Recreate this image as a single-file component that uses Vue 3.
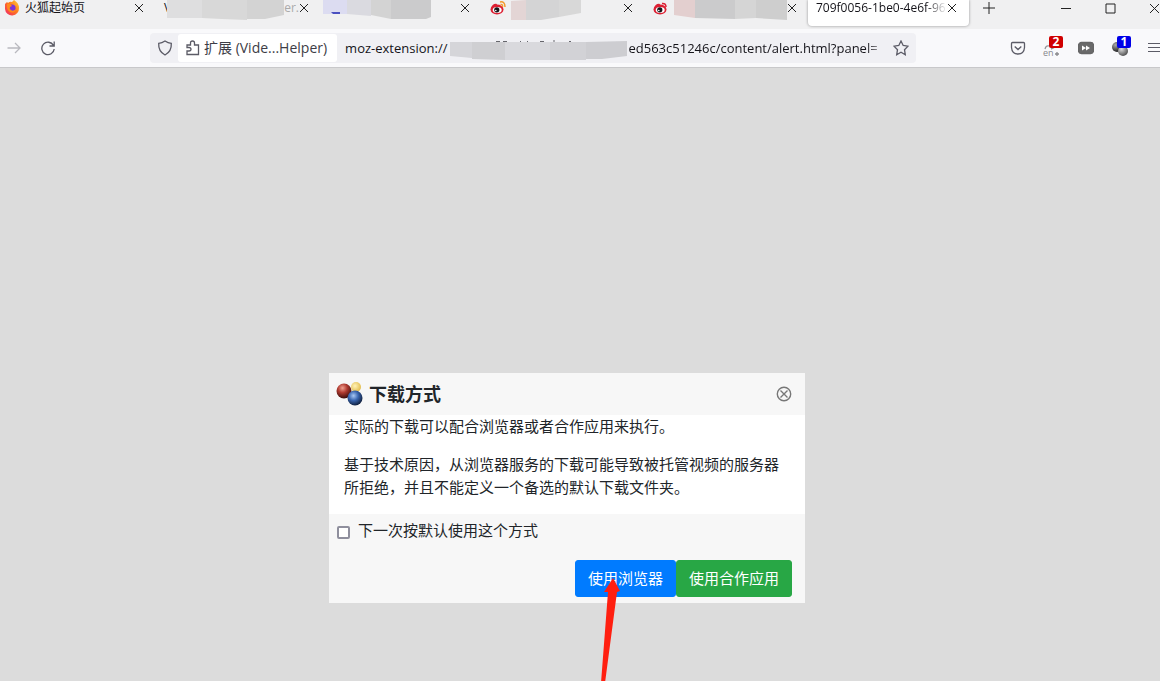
<template>
  <div class="browser">
    <!-- Tab strip -->
    <header class="tab-strip">
      <div v-for="tab in tabs" :key="tab.id" class="tab" :class="[tab.id, { active: tab.active }]">
        <svg v-if="tab.id === 'home'" class="favicon" width="16" height="16" viewBox="0 0 16 16">
          <defs>
            <linearGradient id="fox" x1="1" y1="0" x2="0" y2="1">
              <stop offset="0" stop-color="#ffd43a" />
              <stop offset="0.45" stop-color="#ff7a1f" />
              <stop offset="1" stop-color="#f0226b" />
            </linearGradient>
          </defs>
          <path d="M1 4 L3 2 L4 3 Q6 1 8 2 L10 0 Q15 3 15 8 A7 7 0 0 1 1 9 Z" fill="url(#fox)" />
          <circle cx="8" cy="8" r="3.6" fill="#7b35d8" />
          <path d="M3 4 Q6 3 8 6 L6 7 Q5 9 7 10 Q9 12 12 9 Q11 14 6 12 Q2 9 3 4" fill="#ff8a1c" />
        </svg>
        <svg v-if="tab.weibo" class="favicon" width="16" height="16" viewBox="0 0 16 16">
          <ellipse cx="7" cy="9.5" rx="6.5" ry="5" fill="#dc2033" />
          <path d="M1 8 Q3 3 7 4 L6 7 Z" fill="#dc2033" />
          <ellipse cx="7.200" cy="10" rx="4.500" ry="3" fill="#fff" />
          <circle cx="6.8" cy="9.8" r="2.6" fill="#16161a" />
          <circle cx="5.8" cy="10.5" r="0.8" fill="#fff" />
          <path v-if="tab.id === 'weibo1'" d="M10 2 Q15 1 15 7 M10.500 4.500 Q13 4 12.500 7" fill="none" stroke="#f39a2d" stroke-width="1.5" />
          <path v-else d="M9 3.500 Q13 3 13 7" fill="none" stroke="#dc2033" stroke-width="1.500" />
        </svg>
        <span v-if="tab.title" class="tab-title">{{ tab.title }}</span>
        <svg v-if="tab.patch" class="tab-patch" :width="tab.patchWidth" height="21" :viewBox="'0 0 ' + tab.patchWidth + ' 21'">
          <path v-for="(p, i) in tab.patch" :key="i" :d="p.d" :fill="p.fill" />
        </svg>
        <span v-if="tab.tail" class="tab-tail">{{ tab.tail }}</span>
        <button class="tab-close" aria-label="关闭标签页">
          <svg width="10" height="10" viewBox="0 0 10 10"><path d="M1 1 L9 9 M9 1 L1 9" /></svg>
        </button>
      </div>
      <button class="new-tab" aria-label="新建标签页">
        <svg width="12" height="12" viewBox="0 0 12 12"><path d="M6 0 V12 M0 6 H12" /></svg>
      </button>
      <div class="window-buttons">
        <button aria-label="最小化"><svg width="11" height="11" viewBox="0 0 11 11"><path d="M0 5.500 H10" /></svg></button>
        <button aria-label="最大化"><svg width="11" height="11" viewBox="0 0 11 11"><path d="M1 1 H10 V10 H1 Z" /></svg></button>
        <button aria-label="关闭"><svg width="11" height="11" viewBox="0 0 11 11"><path d="M1 1 L10 10 M10 1 L1 10" /></svg></button>
      </div>
    </header>

    <!-- Navigation toolbar -->
    <nav class="toolbar">
      <button class="tool forward" aria-label="前进">
        <svg width="14" height="14" viewBox="0 0 14 14"><path d="M0.500 7 H13 M8 2 L13 7 L8 12" /></svg>
      </button>
      <button class="tool reload" aria-label="刷新">
        <svg width="16" height="16" viewBox="0 0 16 16"><path d="M13.500 5.500 A6.200 6.200 0 1 0 14.200 9 M14.200 1.500 V6 H9.500" /></svg>
      </button>
      <div class="urlbar">
        <svg class="shield" width="16" height="16" viewBox="0 0 16 16">
          <path d="M8 1 Q11 3 14.300 3.300 Q14.800 11.500 8 15 Q1.200 11.500 1.700 3.300 Q5 3 8 1 Z" />
        </svg>
        <button class="identity">
          <svg width="14" height="16" viewBox="0 0 14 16">
            <path d="M1 5 H4.500 V3 Q4.500 1 6.500 1 Q8.500 1 8.500 3 V5 H12.500 V14.500 H1 V11 H3 Q5 11 5 9.200 Q5 7.500 3 7.500 H1 Z" />
          </svg>
          <span>扩展 (Vide...Helper)</span>
        </button>
        <div class="address">
          <span class="scheme">moz-extension://</span>
          <svg class="url-patch" width="178" height="22" viewBox="0 0 178 22">
            <path d="M0 4 H36 V20 H22 L0 18 Z" fill="#d5d5d9" />
            <path d="M36 4 H55 V22 L22 21 V4 Z" fill="#cfcfd2" />
            <path d="M55 4 H100 V22 H55 Z" fill="#d9d9dd" />
            <path d="M100 4 H136 V22 H100 Z" fill="#d2d2d6" />
            <path d="M136 4 L177 3 V18 L152 21 H136 Z" fill="#cdcdd1" />
            <path d="M46 3.500 H50 M53 3.500 H57 M70 3.500 H71 M77 3.500 H78 M90 3.500 H94 M104 2 V4 M119 3.500 H121" fill="none" stroke="#66666c" stroke-width="1" />
          </svg>
          <span class="path">ed563c51246c/content/alert.html?panel=</span>
        </div>
        <button class="tool star" aria-label="添加书签">
          <svg width="16" height="16" viewBox="0 0 16 16"><path d="M8 1 L10.200 5.500 L15 6.200 L11.500 9.700 L12.300 14.700 L8 12.300 L3.700 14.700 L4.500 9.700 L1 6.200 L5.800 5.500 Z" /></svg>
        </button>
      </div>
      <div class="extensions">
        <button class="tool" aria-label="Pocket">
          <svg width="16" height="16" viewBox="0 0 16 16"><path d="M2.500 2.500 H13.500 Q14.500 2.500 14.500 3.500 V7.500 Q14 14 8 14 Q2 14 1.500 7.500 V3.500 Q1.500 2.500 2.500 2.500 Z M4.700 6.500 L8 9.500 L11.300 6.500" /></svg>
        </button>
        <button class="tool" aria-label="翻译">
          <svg width="18" height="18" viewBox="0 0 18 18">
            <path d="M2 10 Q3 6 6 7 M8 10 Q12 9 14 5" stroke="#929296" />
            <text x="0" y="17" class="mini-text">en</text>
            <path d="M12 15 H16 M14 13 V17" stroke="#88888c" />
          </svg>
          <span class="badge red">2</span>
        </button>
        <button class="tool" aria-label="快进">
          <svg width="16" height="14" viewBox="0 0 16 14">
            <rect x="0.500" y="1.500" width="15" height="11" rx="3" fill="#6a6a6a" stroke="#666" />
            <path d="M4 4.500 L8 7 L4 9.500 Z M8 4.500 L12 7 L8 9.500 Z" fill="#fff" stroke="none" />
          </svg>
        </button>
        <button class="tool" aria-label="Video DownloadHelper">
          <svg width="18" height="18" viewBox="0 0 18 18">
            <defs>
              <radialGradient id="dark" cx="0.350" cy="0.300" r="0.700"><stop offset="0" stop-color="#aaa" /><stop offset="1" stop-color="#222" /></radialGradient>
              <radialGradient id="light" cx="0.350" cy="0.300" r="0.700"><stop offset="0" stop-color="#ddd" /><stop offset="1" stop-color="#555" /></radialGradient>
            </defs>
            <circle cx="6" cy="8" r="5" fill="url(#dark)" stroke="none" />
            <circle cx="12" cy="12" r="5" fill="url(#light)" stroke="none" />
          </svg>
          <span class="badge blue">1</span>
        </button>
        <button class="tool menu" aria-label="菜单">
          <svg width="14" height="12" viewBox="0 0 14 12"><path d="M0 1.500 H14 M0 5.500 H14 M0 9.500 H14" /></svg>
        </button>
      </div>
    </nav>

    <!-- Extension page -->
    <main class="page">
      <section class="dialog">
        <div class="dialog-header">
          <svg width="28" height="26" viewBox="0 0 28 26">
            <defs>
              <radialGradient id="red" cx="0.400" cy="0.300" r="0.700"><stop offset="0" stop-color="#f0a090" /><stop offset="0.450" stop-color="#b03a30" /><stop offset="1" stop-color="#3a0d0c" /></radialGradient>
              <radialGradient id="blue" cx="0.400" cy="0.350" r="0.700"><stop offset="0" stop-color="#a9c8f5" /><stop offset="0.450" stop-color="#3a66b0" /><stop offset="1" stop-color="#0b1730" /></radialGradient>
              <radialGradient id="yellow" cx="0.400" cy="0.400" r="0.700"><stop offset="0" stop-color="#fff2b8" /><stop offset="1" stop-color="#dfb63f" /></radialGradient>
            </defs>
            <circle cx="20" cy="6" r="5" fill="url(#yellow)" />
            <circle cx="8" cy="10" r="7.500" fill="url(#red)" />
            <circle cx="19" cy="17" r="7.500" fill="url(#blue)" />
          </svg>
          <h1>下载方式</h1>
          <button class="dialog-close" aria-label="关闭">
            <svg width="16" height="16" viewBox="0 0 16 16"><circle cx="8" cy="8" r="6.700" /><path d="M4.500 4.500 L11.500 11.500 M11.500 4.500 L4.500 11.500" /></svg>
          </button>
        </div>
        <div class="dialog-body">
          <p>实际的下载可以配合浏览器或者合作应用来执行。</p>
          <p>基于技术原因，从浏览器服务的下载可能导致被托管视频的服务器所拒绝，并且不能定义一个备选的默认下载文件夹。</p>
        </div>
        <div class="dialog-footer">
          <label class="remember">
            <input v-model="remember" type="checkbox" />
            <span>下一次按默认使用这个方式</span>
          </label>
          <div class="actions">
            <button class="btn btn-primary" @click="method = 'browser'">使用浏览器</button>
            <button class="btn btn-success" @click="method = 'coapp'">使用合作应用</button>
          </div>
        </div>
        <svg class="arrow" width="21" height="106" viewBox="0 0 21 106">
          <path d="M13 1 L20 14 L17 15 L5 106 H1 L8 15 L4 15 Z" fill="#ff1f10" />
        </svg>
      </section>
    </main>
  </div>
</template>

<script setup>
import { ref } from 'vue'

const remember = ref(false)
const method = ref('')

const tabs = [
  { id: 'home', title: '火狐起始页' },
  {
    id: 'video',
    title: 'V',
    tail: 'er.',
    patchWidth: 117,
    patch: [
      { d: 'M0 0 H35 V18 H0 Z', fill: '#dededf' },
      { d: 'M35 0 H80 V20 L55 19 L35 18 Z', fill: '#d8d8d8' },
      { d: 'M80 0 H117 V15 L98 19 H80 Z', fill: '#d3d3d3' }
    ]
  },
  {
    id: 'search',
    patchWidth: 108,
    patch: [
      { d: 'M0 0 H24 V14 H0 Z', fill: '#dcdcf1' },
      { d: 'M24 0 H48 V16 L24 14 Z', fill: '#dadae0' },
      { d: 'M48 0 H68 V19 L48 15 Z', fill: '#d3d3d3' },
      { d: 'M68 0 H108 V17 L103 19 H68 Z', fill: '#cbcbcc' },
      { d: 'M8 12 H17 V14 H10 Z', fill: '#4a50c0' }
    ]
  },
  {
    id: 'weibo1',
    weibo: true,
    patchWidth: 70,
    patch: [
      { d: 'M0 1 L15 0 V20 H0 Z', fill: '#e3d5d5' },
      { d: 'M15 0 H48 V17 L30 20 H15 Z', fill: '#d4d4d5' },
      { d: 'M48 0 H70 V13 L48 17 Z', fill: '#d8d8d8' }
    ]
  },
  {
    id: 'weibo2',
    weibo: true,
    patchWidth: 113,
    patch: [
      { d: 'M0 0 H21 V18 L0 15 Z', fill: '#e3cfcf' },
      { d: 'M21 0 H61 V19 L21 18 Z', fill: '#cbcbcc' },
      { d: 'M61 0 H82 V18 L61 19 Z', fill: '#d5d5d5' },
      { d: 'M82 0 H113 V20 L82 18 Z', fill: '#cecece' }
    ]
  },
  { id: 'alert', title: '709f0056-1be0-4e6f-96', active: true }
]
</script>

<style>
html,
body {
  margin: 0;
}
</style>

<style scoped>
.browser {
  display: flex;
  flex-direction: column;
  min-height: 100vh;
  overflow: hidden;
  background: #dcdcdc;
  color: #15141a;
  font-family: 'Open Sans', 'Noto Sans CJK SC', sans-serif;
}

button {
  padding: 0;
  border: none;
  background: none;
  color: inherit;
  font-family: inherit;
  cursor: pointer;
}

svg {
  display: block;
  flex: none;
}

/* Tab strip */
.tab-strip {
  display: flex;
  height: 29px;
  background: #f0f0f1;
  overflow: hidden;
}

.tab {
  display: flex;
  box-sizing: border-box;
  flex: 0 1 163px;
  min-width: 0;
  height: 16px;
  padding: 0 12px 0 8px;
  align-items: center;
  font-size: 12px;
  line-height: 16px;
}

.tab.home {
  flex-basis: 156px;
  padding-left: 4px;
}

.tab.search {
  padding-left: 4px;
}

.tab.active {
  flex-basis: 161px;
  height: 26px;
  padding-bottom: 10px;
  border-radius: 0 0 4px 4px;
  background: #fff;
  box-shadow: 0 0 3px rgba(0, 0, 0, 0.4);
}

.favicon {
  margin-right: 5px;
}

.tab-title {
  white-space: nowrap;
}

.active .tab-title {
  flex: 1;
  mask-image: linear-gradient(to right, #000 84%, transparent);
}

.tab-patch {
  align-self: flex-start;
}

/* the smudge covers the right half of the letter */
.video .tab-patch {
  margin-left: -4px;
}

.tab-tail {
  color: #aaa;
}

.tab-close {
  margin-left: auto;
}

.tab-close svg,
.new-tab svg,
.window-buttons svg {
  fill: none;
  stroke: #222;
  stroke-width: 1;
}

.new-tab {
  height: 16px;
  padding: 0 14px;
}

.window-buttons {
  display: flex;
  gap: 33px;
  height: 16px;
  margin-left: auto;
}

/* Toolbar */
.toolbar {
  display: flex;
  height: 38px;
  padding-left: 7px;
  align-items: center;
  background: #f9f9fb;
  border-bottom: 1px solid #c8c8ca;
}

.tool {
  position: relative;
}

.tool svg,
.shield,
.identity svg {
  fill: none;
  stroke: #5b5b66;
  stroke-width: 1.3;
}

.forward {
  opacity: 0.4;
}

.reload {
  margin-left: 19px;
}

.urlbar {
  display: flex;
  flex: 1;
  min-width: 0;
  height: 30px;
  margin-left: 94px;
  padding: 0 7px;
  box-sizing: border-box;
  align-items: center;
  border-radius: 4px;
  background: #f0f0f4;
}

.identity {
  display: flex;
  height: 28px;
  margin: 0 8px 0 5px;
  padding: 0 10px 1px 8px;
  align-items: center;
  gap: 4px;
  border-radius: 3px;
  background: #fff;
  color: #3d3d46;
  font-size: 14px;
  line-height: 20px;
  white-space: nowrap;
}

.address {
  display: flex;
  flex: 1;
  min-width: 0;
  align-items: center;
  font-size: 13px;
  line-height: 22px;
  white-space: nowrap;
}

.url-patch {
  margin: 2px 0 0 3px;
}

.path {
  flex: 1;
  min-width: 0;
  mask-image: linear-gradient(to right, #000 92%, transparent);
}

.star {
  margin-left: 6px;
}

.extensions {
  display: flex;
  width: 150px;
  margin-left: 94px;
  align-items: center;
  gap: 17px;
}

.menu {
  margin-left: 2px;
}

.menu svg {
  stroke-width: 1;
}

.mini-text {
  fill: #88888c;
  stroke: none;
  font-size: 9px;
}

.badge {
  position: absolute;
  top: -3px;
  right: -2px;
  width: 14px;
  height: 12px;
  border-radius: 2px;
  color: #fff;
  font-size: 12px;
  font-weight: bold;
  line-height: 12px;
}

.badge.red {
  background: #d00000;
}

.badge.blue {
  background: #0000e8;
}

/* Dialog */
.page {
  display: flex;
  flex: 1;
  padding: 305px 26px 0 0;
  align-items: flex-start;
  justify-content: center;
}

.dialog {
  position: relative;
  width: 476px;
  background: #fff;
  color: #212529;
  font-size: 15px;
  line-height: 23px;
}

.dialog-header {
  display: flex;
  height: 42px;
  padding: 0 13px 0 7px;
  align-items: center;
  background: #f7f7f7;
}

h1 {
  margin: 0 auto 0 5px;
  font-size: 18px;
  line-height: 24px;
}

.dialog-close svg {
  fill: none;
  stroke: #777;
  stroke-width: 1.4;
}

.dialog-body {
  padding: 0 15px;
}

p {
  margin: 0;
  padding-bottom: 15px;
}

.dialog-footer {
  padding: 5px 13px 6px 8px;
  background: #f7f7f7;
}

.remember {
  display: flex;
  align-items: center;
  gap: 8px;
}

.remember input {
  appearance: none;
  width: 13px;
  height: 13px;
  margin: 3px 0 0;
  border: 2px solid #8f8f9d;
  border-radius: 2px;
  background: #fff;
}

.remember input:checked {
  background: #007bff;
}

.actions {
  display: flex;
  margin-top: 18px;
  justify-content: flex-end;
}

.btn {
  padding: 6px 12px;
  border: 1px solid #007bff;
  border-radius: 3px;
  background: #007bff;
  color: #fff;
  font-size: 15px;
  line-height: 23px;
}

.btn-success {
  border-color: #28a745;
  background: #28a745;
}

.arrow {
  position: absolute;
  top: 204px;
  right: 184px;
  pointer-events: none;
}
</style>
